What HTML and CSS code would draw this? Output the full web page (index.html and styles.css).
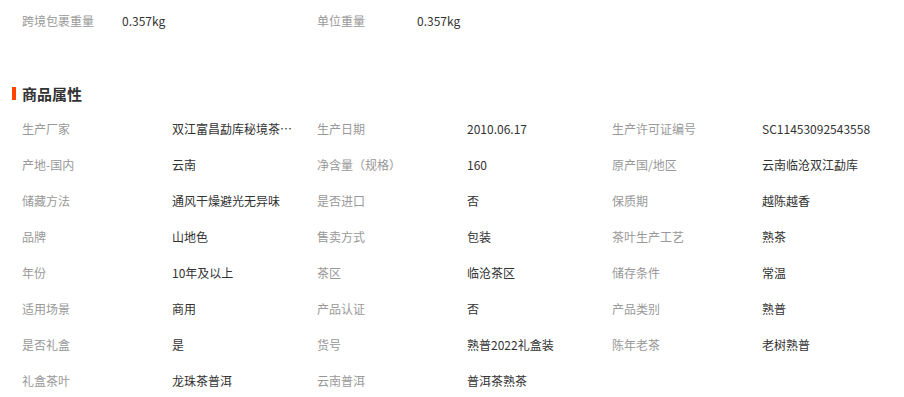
FILE: index.html
```html
<!DOCTYPE html>
<html lang="zh-CN">
<head>
<meta charset="utf-8">
<link rel="stylesheet" href="styles.css">
</head>
<body>
<div class="page">
  <div class="top-row">
    <div class="pair"><span class="tl">跨境包裹重量</span><span class="tv">0.357kg</span></div>
    <div class="pair"><span class="tl">单位重量</span><span class="tv">0.357kg</span></div>
  </div>
  <h2 class="heading">商品属性</h2>
  <div class="attrs">
    <div class="lb">生产厂家</div><div class="val"><span class="clip">双江富昌勐库秘境茶业有限公司</span></div>
    <div class="lb">生产日期</div><div class="val">2010.06.17</div>
    <div class="lb">生产许可证编号</div><div class="val">SC11453092543558</div>

    <div class="lb">产地-国内</div><div class="val">云南</div>
    <div class="lb">净含量（规格）</div><div class="val">160</div>
    <div class="lb">原产国/地区</div><div class="val">云南临沧双江勐库</div>

    <div class="lb">储藏方法</div><div class="val">通风干燥避光无异味</div>
    <div class="lb">是否进口</div><div class="val">否</div>
    <div class="lb">保质期</div><div class="val">越陈越香</div>

    <div class="lb">品牌</div><div class="val">山地色</div>
    <div class="lb">售卖方式</div><div class="val">包装</div>
    <div class="lb">茶叶生产工艺</div><div class="val">熟茶</div>

    <div class="lb">年份</div><div class="val">10年及以上</div>
    <div class="lb">茶区</div><div class="val">临沧茶区</div>
    <div class="lb">储存条件</div><div class="val">常温</div>

    <div class="lb">适用场景</div><div class="val">商用</div>
    <div class="lb">产品认证</div><div class="val">否</div>
    <div class="lb">产品类别</div><div class="val">熟普</div>

    <div class="lb">是否礼盒</div><div class="val">是</div>
    <div class="lb">货号</div><div class="val">熟普2022礼盒装</div>
    <div class="lb">陈年老茶</div><div class="val">老树熟普</div>

    <div class="lb">礼盒茶叶</div><div class="val">龙珠茶普洱</div>
    <div class="lb">云南普洱</div><div class="val">普洱茶熟茶</div>
  </div>
</div>
</body>
</html>
```
FILE: styles.css
```css
html, body {
  margin: 0;
  padding: 0;
  background: #fff;
}
body {
  font-family: "Noto Sans CJK SC", "Noto Sans", sans-serif;
  font-size: 12px;
  color: #333;
}
.page {
  padding: 3px 0 0 22px;
}
.top-row {
  display: flex;
  height: 36px;
  line-height: 36px;
}
.pair {
  width: 295px;
  display: flex;
}
.tl {
  width: 100px;
  color: #999;
}
.tv {
  color: #333;
}
.heading {
  position: relative;
  margin: 45px 0 7px 0;
  font-size: 15px;
  font-weight: bold;
  line-height: 20px;
  color: #333;
}
.heading::before {
  content: "";
  position: absolute;
  left: -10px;
  top: 3px;
  width: 4px;
  height: 13px;
  background: #ff4400;
}
.attrs {
  display: grid;
  grid-template-columns: 150px 145px 150px 145px 150px auto;
  grid-auto-rows: 36px;
  line-height: 36px;
}
.lb {
  color: #999;
}
.val {
  color: #333;
  white-space: nowrap;
}
.clip {
  display: inline-block;
  max-width: 124px;
  overflow: hidden;
  text-overflow: ellipsis;
  white-space: nowrap;
  vertical-align: top;
}
```
